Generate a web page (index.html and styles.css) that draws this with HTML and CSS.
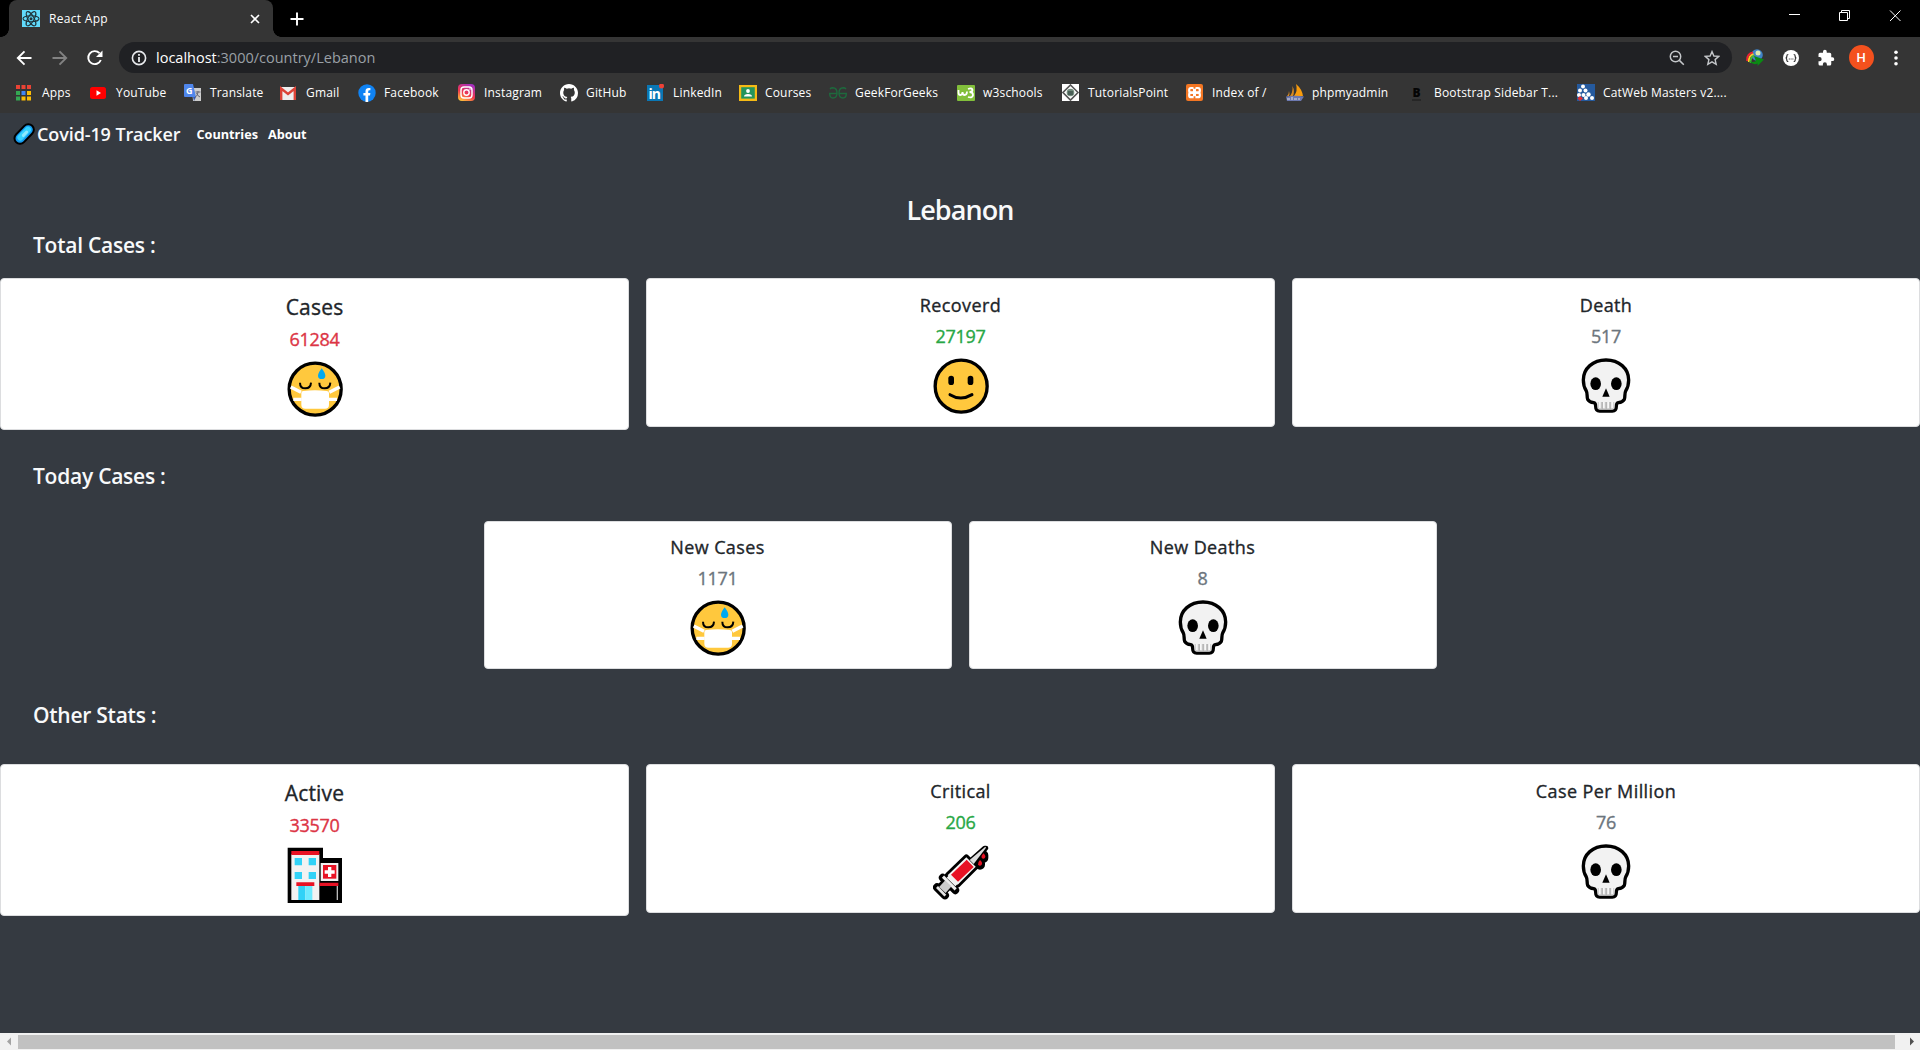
FILE: index.html
```html
<!DOCTYPE html>
<html lang="en">
<head>
<meta charset="utf-8">
<title>React App</title>
<link rel="stylesheet" href="styles.css">
</head>
<body>
<svg class="defs" aria-hidden="true">
  <symbol id="mask" viewBox="0 0 168 168">
    <circle cx="84.500" cy="84.500" r="78" fill="#ffc83d" stroke="#000" stroke-width="10"/>
    <path d="M11 78 42 94M158 78 127 94M19 115H44M150 115H125" stroke="#fff" stroke-width="10" fill="none"/>
    <path d="M43 96q0-6 6-6 18-2 35-2t35 2q7 0 7 6v35q0 12-12 12H55q-12 0-12-12Z" fill="#fff"/>
    <path d="M39 65q0 17 16 17t17-17M97 65q0 17 16 17t17-17" fill="none" stroke="#000" stroke-width="6"/>
    <path d="M104 22q11 15 11 22a11 10 0 0 1-22 0q0-7 11-22" fill="#00a9f1"/>
  </symbol>
  <symbol id="smile" viewBox="0 0 168 168">
    <circle cx="84.500" cy="84.500" r="78" fill="#ffc83d" stroke="#000" stroke-width="10"/>
    <rect x="46" y="53" width="17" height="28" rx="8.500"/><rect x="104" y="53" width="17" height="28" rx="8.500"/>
    <path d="M51 110q32 20 66 0" fill="none" stroke="#000" stroke-width="9" stroke-linecap="round"/>
  </symbol>
  <symbol id="skull" viewBox="0 0 168 168">
    <path d="M84 6C45 6 16 31 16 66c0 16 3 24 9 33 4 7 1 18 4 25 4 7 10 9 18 10 5 1 6 4 6 11 0 10 5 14 12 14h38c7 0 12-4 12-14 0-7 1-10 6-11 8-1 14-3 18-10 3-7 0-18 4-25 6-9 9-17 9-33C152 31 123 6 84 6Z" fill="#f2f2f2" stroke="#000" stroke-width="10" stroke-linejoin="round"/>
    <path d="M59 132h50v19q0 4-6 4H65q-6 0-6-4Z" fill="#d2d2d2"/>
    <path d="M63 132h5v18h-5zm12 0h5v18h-5zm13 0h5v18h-5zm12 0h5v18h-5z" fill="#f8f8f8"/>
    <path d="M71 132h3v21h-3zm12 0h3v21h-3zm12 0h3v21h-3z" fill="#aaa"/>
    <ellipse cx="53" cy="77" rx="16" ry="19"/><ellipse cx="115" cy="77" rx="16" ry="19"/>
    <path d="M84 91 95 116H73Z"/>
  </symbol>
  <symbol id="hospital" viewBox="0 0 168 168">
    <path d="M2 2H108V33H165V170H2Z"/>
    <path d="M13 22h84v137H13z" fill="#f2f2f2"/><path d="M13 12h84v12H13z" fill="#e81224"/>
    <path d="M23 33h22v22H23zM65 33h22v22H65zM23 75h22v21H23zM65 75h22v21H65zM34 117h21v42H34z" fill="#31d2f7"/>
    <path d="M55 117h21v42H55z" fill="#6eeaff"/><path d="M28 106h54v11H28zM97 107h57v10H97z" fill="#e81224"/>
    <path d="M101 48h53v54h-53z" fill="#f2f2f2"/><path d="M108 54h40v41h-40z" fill="#e81224"/>
    <path d="M123 60h10v10h10v10h-10v10h-10V80h-10V70h10z" fill="#fff"/><path d="M149 117h4v42h-4z" fill="#bbb"/>
  </symbol>
  <symbol id="syringe" viewBox="0 0 168 168">
    <g stroke="#000" stroke-linejoin="round" stroke-linecap="round" fill="#000">
      <path d="M100 40 128 68 74 122 44 94Z" stroke-width="17"/>
      <path d="M29 101 67 139" stroke-width="23"/>
      <path d="M50 112 25 138" stroke-width="38" stroke-linecap="butt"/>
      <path d="M12 130 36 154" stroke-width="24"/>
      <path d="M112 50 155 12 159 12 120 58Z" stroke-width="14"/>
      <path d="M151 34v8M141 54v8" stroke-width="30"/>
    </g>
    <path d="M100 40 128 68 74 122 44 94Z" fill="#f5f5f5"/>
    <path d="M30 98 68 136" stroke="#eee" stroke-width="9"/>
    <path d="M46 96 60 110 72 122" stroke="#f2f2f2" stroke-width="14"/>
    <path d="M46 118 28 138" stroke="#ccc" stroke-width="26"/>
    <path d="M12 129 37 155" stroke="#e6e6e6" stroke-width="8"/>
    <path d="M110 48 157 8 159 11 122 60Z" fill="#ddd"/>
    <path d="M101 47 122 69 75 113 54 92Z" fill="#e81224"/>
    <path d="M141 48q9 8 5 14-5 6-11 0-2-6 6-14M151 28q9 8 5 13-5 6-10 0-2-5 5-13" fill="#e81224"/>
  </symbol>
</svg>

<header class="browser">
  <div class="tabstrip">
    <div class="tab">
      <svg class="i18" viewBox="0 0 18 18"><path fill="#61dafb" d="M0 0h18v17H0z"/><g fill="none" stroke="#20333a" stroke-width="1.100"><ellipse cx="9" cy="8.700" rx="8" ry="3"/><ellipse cx="9" cy="8.700" rx="8" ry="3" transform="rotate(60 9 8.700)"/><ellipse cx="9" cy="8.700" rx="8" ry="3" transform="rotate(120 9 8.700)"/></g><circle cx="9" cy="8.700" r="1.500" fill="#20333a"/></svg>
      <span class="tab-title">React App</span>
      <svg class="tab-close" viewBox="0 0 10 10"><path d="M1 1 9 9M9 1 1 9"/></svg>
    </div>
    <svg class="newtab" viewBox="0 0 14 14"><path d="M7 .5v13M.5 7h13"/></svg>
    <svg class="winctl" viewBox="0 0 113 12"><path d="M0 4.500H11M50.500 2.500h8v8h-8zM52.500 2.500V.5h8v8H59M101 .5 111.500 11M111.500 .5 101 11"/></svg>
  </div>

  <div class="toolbar">
    <svg class="navbtns" viewBox="0 0 88 18"><g fill="none" stroke-width="1.900"><path d="M15.500 9H2M8.500 2.300 1.800 9l6.700 6.700" stroke="#fff"/><path d="M36.500 9H50M43.500 2.300 50.200 9l-6.700 6.700" stroke="#828282"/><path d="M83.500 4.200A6.500 6.500 0 1 0 84.800 11" stroke="#fff"/></g><path d="M86.500 1.500V8H80Z" fill="#fff"/></svg>
    <div class="urlbar">
      <svg class="i16" viewBox="0 0 16 16"><circle cx="8" cy="8" r="6.600" fill="none" stroke="#e8eaed" stroke-width="1.600"/><path d="M7.100 7h1.800v5H7.100zM7.100 4h1.800v1.800H7.100z" fill="#e8eaed"/></svg>
      <span class="url"><b>localhost</b>:3000/country/Lebanon</span>
      <svg class="i16 zoom" viewBox="0 0 16 16"><g fill="none" stroke="#c4c7ca" stroke-width="1.500"><circle cx="6.500" cy="6.500" r="5.200"/><path d="M4 6.500h5M10.400 10.400l4.400 4.400"/></g></svg>
      <svg class="i16" viewBox="0 0 16 16"><path d="M8 1.600 9.900 6l4.900.400-3.700 3.200 1.100 4.700L8 11.800l-4.200 2.500 1.100-4.700L1.200 6.400 6.100 6Z" fill="none" stroke="#c4c7ca" stroke-width="1.400"/></svg>
    </div>
    <div class="exts">
      <svg class="i18" viewBox="0 0 18 18"><circle cx="11" cy="6" r="5.800" fill="#3f83c8"/><circle cx="12" cy="4" r="2.500" fill="#d9e8b0"/><g fill="none" stroke-width="1.800"><path d="M7 3.500Q.5 5 1.200 12" stroke="#e23"/><path d="M7.500 5Q2.500 6.500 2.800 13" stroke="#fc2"/><path d="M8.500 6.500Q4 8 4.600 14" stroke="#4b3"/></g><path d="M3 12q4 2 7 0L8 7l10 3.500L11.500 17l.3-2.500Q7 17 3 12" fill="#0b8a14"/></svg>
      <svg class="i18" viewBox="0 0 18 18"><circle cx="9" cy="9" r="8" fill="#fff"/><path d="M6.300 5.500q-1.500 0-1.500 1.800T3.600 9q1.200 0 1.200 1.800t1.500 1.700M11.700 5.500q1.500 0 1.500 1.800T14.400 9q-1.200 0-1.200 1.800t-1.500 1.700M6.800 10h1M8.600 10h1M10.400 10h1" fill="none" stroke="#333" stroke-width="1.200"/></svg>
      <svg class="i18" viewBox="0 0 24 24"><path fill="#fff" d="M20.500 11H19V7a2 2 0 0 0-2-2h-4V3.500a2.500 2.500 0 0 0-5 0V5H4a2 2 0 0 0-2 2v3.800h1.500a2.700 2.700 0 0 1 0 5.400H2V20a2 2 0 0 0 2 2h3.800v-1.500a2.700 2.700 0 0 1 5.400 0V22H17a2 2 0 0 0 2-2v-4h1.500a2.500 2.500 0 0 0 0-5"/></svg>
      <span class="avatar">H</span>
      <svg class="dots" viewBox="0 0 4 16"><circle cx="2" cy="2.200" r="1.800"/><circle cx="2" cy="8" r="1.800"/><circle cx="2" cy="13.800" r="1.800"/></svg>
    </div>
  </div>

  <nav class="bookmarks">
    <a><svg class="i18" viewBox="0 0 18 18"><path fill="#ea4335" d="M0 1h4v4H0zM5.500 1h4v4h-4zM11 1h4v4h-4z"/><path fill="#34a853" d="M0 7h4v4H0zM0 12.500h4v4H0z"/><path fill="#4285f4" d="M5.500 7h4v4h-4z"/><path fill="#fbbc05" d="M11 7h4v4h-4zM5.500 12.500h4v4h-4zM11 12.500h4v4h-4z"/></svg><span>Apps</span></a>
    <a><svg class="i18" viewBox="0 0 18 18"><rect y="3" width="16" height="12" rx="2.500" fill="#f00"/><path d="M6.500 6.200v5.600L11 9Z" fill="#fff"/></svg><span>YouTube</span></a>
    <a><svg class="i18" viewBox="0 0 18 18"><path d="M8 4h9v13H9z" fill="#ccc"/><path d="M1 0h8l3 13H1q-1 0-1-1V1q0-1 1-1" fill="#4f86ec"/><path d="m9 13 3 0-2 4Z" fill="#3459b0"/><path d="M11.500 8h5M14 7v1q0 4-3 5M12.500 9q1 3 3.500 4" stroke="#667" fill="none"/><text x="2" y="10" font-size="9" font-weight="700" fill="#fff">G</text></svg><span>Translate</span></a>
    <a><svg class="i18" viewBox="0 0 18 18"><path fill="#eee" d="M0 3h16v13H0z"/><path d="M1.200 16V4.500L8 10l6.800-5.500V16" fill="none" stroke="#dc4337" stroke-width="2.400"/></svg><span>Gmail</span></a>
    <a><svg class="i18" viewBox="0 0 18 18"><circle cx="9" cy="9" r="8.700" fill="#1083f4"/><path fill="#fff" d="M7.500 18v-6.500H5.400V9h2.100V7.200C7.500 5 8.800 3.900 10.700 3.900l1.700.100v2.200h-1q-1.200 0-1.200 1.300V9h2.200l-.400 2.500h-1.800V18Z"/></svg><span>Facebook</span></a>
    <a><svg class="i18" viewBox="0 0 18 18"><defs><linearGradient id="ig" x1=".2" y1="1" x2=".7" y2="0"><stop stop-color="#ffc43a"/><stop offset=".45" stop-color="#f0364d"/><stop offset="1" stop-color="#a52fc0"/></linearGradient></defs><rect width="17" height="17" rx="4" fill="url(#ig)"/><g fill="none" stroke="#fff" stroke-width="1.400"><rect x="3" y="3" width="11" height="11" rx="3"/><circle cx="8.500" cy="8.500" r="2.700"/></g><circle cx="12" cy="5" r=".8" fill="#fff"/></svg><span>Instagram</span></a>
    <a><svg class="i18" viewBox="0 0 16 16"><path fill="#fff" d="M8 0C3.580 0 0 3.580 0 8c0 3.540 2.290 6.530 5.470 7.590.4.070.55-.17.55-.38 0-.19-.010-.82-.010-1.490-2.010.37-2.530-.49-2.690-.94-.09-.23-.48-.94-.82-1.130-.28-.15-.68-.52-.010-.53.63-.010 1.080.58 1.230.82.72 1.210 1.870.87 2.330.66.070-.52.28-.87.51-1.070-1.780-.2-3.640-.89-3.640-3.950 0-.87.31-1.590.82-2.150-.08-.2-.36-1.020.08-2.120 0 0 .67-.21 2.200.82a7.600 7.600 0 0 1 4 0c1.530-1.040 2.200-.82 2.200-.82.44 1.100.16 1.920.08 2.120.51.56.82 1.270.82 2.150 0 3.070-1.870 3.750-3.650 3.950.29.25.54.73.54 1.480 0 1.070-.010 1.930-.010 2.200 0 .21.15.46.55.38A8 8 0 0 0 16 8c0-4.420-3.580-8-8-8"/></svg><span>GitHub</span></a>
    <a><svg class="i18" viewBox="0 0 18 18"><path fill="#0a77b5" d="M0 1h16v16H0z"/><text x="1.500" y="14.500" font-size="14" font-weight="700" fill="#fff" textLength="12.500">in</text><circle cx="14.500" cy="2" r="2.500" fill="#ef4136"/></svg><span>LinkedIn</span></a>
    <a><svg class="i18" viewBox="0 0 18 18"><path fill="#f5ba15" d="M0 1h18v16H0z"/><path fill="#23955d" d="M2.200 3.200h13.600v11.400H2.200z"/><circle cx="9" cy="7" r="1.900" fill="#fff"/><path d="M5 12.500q0-2.500 4-2.500t4 2.500Z" fill="#fff"/></svg><span>Courses</span></a>
    <a><svg class="i18" viewBox="0 0 18 18"><g fill="none" stroke="#1e6a3d" stroke-width="1.400"><path d="M1 5q1-1.200 2.800-1.200Q8 4 8 9t-4 5Q.7 14 .7 9.500H8M17 5q-1-1.200-2.800-1.200Q10 4 10 9t4 5q3.300 0 3.300-4.500H10"/></g></svg><span>GeekForGeeks</span></a>
    <a><svg class="i18" viewBox="0 0 18 18"><rect y="1" width="18" height="16" rx="1" fill="#82bf3b"/><path d="M1.500 6v3q0 2 2 2t2-3q0 3 2.200 3T10 7.500M11 5q4-1.500 4.500 1 0 2-3 2 3.500 0 3.500 3-.5 3.500-5 2" fill="none" stroke="#fff" stroke-width="1.800"/></svg><span>w3schools</span></a>
    <a><svg class="i18" viewBox="0 0 18 18"><path fill="#fff" d="M0 0h17v17H0z"/><path d="m8.500 1 7.500 7.500L8.500 16 1 8.500Z" fill="none" stroke="#555" stroke-width="1.600"/><circle cx="8.500" cy="8.500" r="3.800" fill="#718b7b"/><path d="M6 8h5M6 10h5" stroke="#233"/></svg><span>TutorialsPoint</span></a>
    <a><svg class="i18" viewBox="0 0 18 18"><rect width="17" height="17" rx="2" fill="#f37623"/><g fill="none" stroke="#fff" stroke-width="2.200"><rect x="3.200" y="4" width="5" height="4.600" rx="1.800"/><rect x="8.800" y="4" width="5" height="4.600" rx="1.800"/><rect x="3.200" y="8.600" width="5" height="4.600" rx="1.800"/><rect x="8.800" y="8.600" width="5" height="4.600" rx="1.800"/></g><path d="M7 4.500h3v3H7zM7 9.800h3v3H7z" fill="#fff"/><path d="M7.600 2.500h1.800v2.300H7.600zM7.600 12.300h1.800v2.200H7.600z" fill="#f37623"/></svg><span>Index of /</span></a>
    <a><svg class="i18" viewBox="0 0 18 18"><path d="M8 12Q12 7 10 0q6 5 7 12Z" fill="#f89c0e"/><path d="M4 12Q7 8 6.500 2 9 7 7 12ZM1 12q2-2 2-5 1 3 0 5Z" fill="#d98a20"/><path d="M0 12.500q9-1.500 18 0l-3 4.500H1Z" fill="#6c78af"/><path d="M1 15h3M6 13v3M8 15h3M13 14v2" stroke="#ddd"/></svg><span>phpmyadmin</span></a>
    <a><svg class="i18" viewBox="0 0 18 18"><path d="M4 16h9" stroke="#222" stroke-width="1.500"/><text x="4.500" y="13" font-size="12" font-weight="800" fill="#050505">B</text></svg><span>Bootstrap Sidebar T...</span></a>
    <a><svg class="i18" viewBox="0 0 18 18"><path fill="#255a9e" d="M0 0h18v17H0z"/><g fill="#fff"><circle cx="6" cy="2.500" r="2"/><circle cx="3" cy="6.500" r="2"/><circle cx="8.500" cy="6.500" r="2"/><circle cx="2" cy="11" r="2"/><circle cx="6.500" cy="11" r="2"/><circle cx="11.500" cy="10.500" r="2.200"/><circle cx="9" cy="14" r="2"/><circle cx="15" cy="14" r="2"/></g><path fill="#e22d33" d="m3 12 3 2.500L3 17 .500 14.500Z"/></svg><span>CatWeb Masters v2....</span></a>
  </nav>
</header>

<main class="app">
  <nav class="navbar">
    <svg class="microbe" viewBox="0 0 66 66"><g stroke-linecap="round"><path d="M21 46 46 20" stroke="#000" stroke-width="39"/><path d="M21 46 46 20" stroke="#159bf0" stroke-width="27"/><path d="M22 44 45 20" stroke="#35d3ff" stroke-width="18"/><path d="M31 37l10-10" stroke="#8eeaff" stroke-width="9"/></g></svg>
    <span class="brand">Covid-19 Tracker</span>
    <a class="link">Countries</a>
    <a class="link">About</a>
  </nav>

  <h1 class="country">Lebanon</h1>

  <h2 class="first">Total Cases :</h2>
  <section class="row">
    <article class="card big"><h3>Cases</h3><p class="red">61284</p><svg><use href="#mask"/></svg></article>
    <article class="card"><h3>Recoverd</h3><p class="green">27197</p><svg><use href="#smile"/></svg></article>
    <article class="card"><h3>Death</h3><p>517</p><svg><use href="#skull"/></svg></article>
  </section>

  <h2>Today Cases :</h2>
  <section class="row today">
    <article class="card"><h3>New Cases</h3><p>1171</p><svg><use href="#mask"/></svg></article>
    <article class="card"><h3>New Deaths</h3><p>8</p><svg><use href="#skull"/></svg></article>
  </section>

  <h2>Other Stats :</h2>
  <section class="row other">
    <article class="card big"><h3>Active</h3><p class="red">33570</p><svg><use href="#hospital"/></svg></article>
    <article class="card"><h3>Critical</h3><p class="green">206</p><svg><use href="#syringe"/></svg></article>
    <article class="card"><h3>Case Per Million</h3><p>76</p><svg><use href="#skull"/></svg></article>
  </section>
</main>

<footer class="scrollbar">
  <svg viewBox="0 0 18 17"><path d="M11 4.500v8L7 8.500Z" fill="#a3a3a3"/></svg>
  <div class="thumb"></div>
  <svg class="right" viewBox="0 0 18 17"><path d="M8 4.500v8l4-4Z" fill="#505050"/></svg>
</footer>
</body>
</html>
```
FILE: styles.css
```css
* { box-sizing: border-box; }
body {
  margin: 0;
  width: 1920px;
  height: 1050px;
  overflow: hidden;
  display: flex;
  flex-direction: column;
  background: #353a41;
  font-family: "Open Sans", "Noto Sans", sans-serif;
}
h1, h2, h3, p { margin: 0; }
svg { display: block; flex: none; }
.defs { width: 0; height: 0; position: absolute; }
.i18 { width: 18px; height: 18px; }
.i16 { width: 16px; height: 16px; }

/* browser chrome */
.browser { height: 113px; background: #353535; color: #fff; flex: none; }
.tabstrip { height: 37px; background: #000; display: flex; align-items: center; padding-left: 9px; }
.tab {
  width: 264px; height: 37px; background: #353535; border-radius: 8px 8px 0 0;
  display: flex; align-items: center; padding: 0 13px; position: relative;
}
.tab::before, .tab::after {
  content: ""; position: absolute; bottom: 0; width: 8px; height: 8px;
}
.tab::before { left: -8px; background: radial-gradient(circle at 0 0, #000 7.500px, #353535 8px); }
.tab::after { right: -8px; background: radial-gradient(circle at 100% 0, #000 7.500px, #353535 8px); }
.tab-title { margin-left: 9px; font-size: 12px; letter-spacing: .3px; }
.tab-close { width: 10px; height: 10px; margin-left: auto; stroke: #fff; stroke-width: 1.600; }
.newtab { width: 14px; height: 14px; margin-left: 17px; stroke: #fff; stroke-width: 1.900; }
.winctl { width: 113px; height: 12px; align-self: flex-start; margin: 10px 18px 0 auto; stroke: #fff; fill: none; stroke-width: 1; }
.toolbar { height: 41px; display: flex; align-items: center; padding-left: 16px; }
.navbtns { width: 88px; height: 18px; }
.urlbar {
  width: 1613px; height: 31px; margin-left: 15px; border-radius: 16px; background: #202124;
  display: flex; align-items: center; padding: 0 12px;
}
.url { margin-left: 9px; font-size: 14.500px; color: #9aa0a6; white-space: nowrap; }
.url b { font-weight: 400; color: #fff; }
.zoom { margin: 0 19px 0 auto; }
.exts { flex: 1; display: flex; align-items: center; padding-left: 14px; }
.exts svg { margin-right: 17.500px; }
.avatar {
  width: 25px; height: 25px; border-radius: 50%; background: #f4511e; margin-left: -4px;
  font: 500 13px/25px Roboto, sans-serif; text-align: center;
}
.exts .dots { width: 4px; height: 16px; margin: 0 0 0 20px; fill: #fff; }
.bookmarks {
  display: grid; padding-left: 16px; height: 29px;
  grid-template-columns: 74px 94px 96px 78px 100px 102px 87px 92px 90px 128px 105px 124px 100px 122px 169px 160px;
}
.bookmarks a {
  display: flex; align-items: center; gap: 8px;
  font-size: 12px; line-height: 18px; letter-spacing: .17px; white-space: nowrap;
}

/* page */
.app { flex: 1; min-height: 0; color: #f8f9fa; }
.navbar { height: 43px; padding: 0 0 2px 13px; display: flex; align-items: center; white-space: nowrap; }
.microbe { width: 22px; height: 22px; }
.brand { margin-left: 2px; font-size: 18px; font-weight: 600; letter-spacing: -.1px; }
.link { font-size: 12.700px; font-weight: 700; color: #fff; margin-left: 16px; }
.link + .link { margin-left: 10px; }
.country { margin-top: 37px; text-align: center; font-size: 27px; line-height: 34px; font-weight: 600; letter-spacing: -.9px; }
h2 { margin: 33px 0 32px; padding-left: 33px; font-size: 21px; line-height: 26px; font-weight: 600; letter-spacing: -.25px; }
h2.first { margin: 5px 0 20px; }
.row { display: grid; grid-template-columns: 629px 629px 628px; column-gap: 17px; align-items: start; height: 152px; }
.row.today { grid-template-columns: 468px 468px; justify-content: center; height: 148px; }
.today + h2 { margin-bottom: 36px; }
.card {
  height: 149px; background: #fff; border: 1px solid #dcdddf; border-radius: 4px;
  padding-top: 13px; display: flex; flex-direction: column; align-items: center; color: #212529;
  -webkit-text-stroke: .35px currentColor;
}
.card h3 { font-size: 18px; line-height: 27px; font-weight: 400; letter-spacing: .4px; }
.card p { margin: 4px 0 7.500px; font-size: 18px; line-height: 27px; letter-spacing: -.3px; color: #6c757d; }
.card svg { width: 56px; height: 56px; }
.card.big { height: 152px; }
.card.big h3 { font-size: 21px; line-height: 30px; letter-spacing: .2px; }
.today .card { height: 148px; padding-top: 12px; }
.card .red { color: #dc3545; }
.card .green { color: #28a745; }

.scrollbar { height: 17px; background: #f1f1f1; display: flex; align-items: center; flex: none; }
.scrollbar svg { width: 18px; height: 17px; }
.scrollbar .thumb { width: 1877px; height: 14px; background: #c1c1c1; }
.scrollbar .right { margin-left: auto; }
```
